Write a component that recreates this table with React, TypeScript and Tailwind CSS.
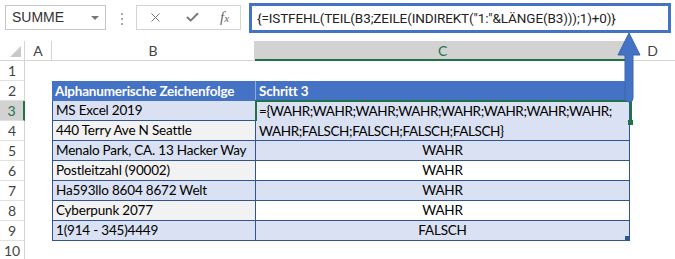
import { Check, X } from "lucide-react";

const uiFont = { fontFamily: '"Liberation Sans", Arial, sans-serif' };
const cellFont = { fontFamily: 'Lato, "Liberation Sans", sans-serif' };

const rows = [
  { n: 3, b: "MS Excel 2019", c: null },
  { n: 4, b: "440 Terry Ave N Seattle", c: null },
  { n: 5, b: "Menalo Park, CA. 13 Hacker Way", c: "WAHR" },
  { n: 6, b: "Postleitzahl (90002)", c: "WAHR" },
  { n: 7, b: "Ha593llo 8604 8672 Welt", c: "WAHR" },
  { n: 8, b: "Cyberpunk 2077", c: "WAHR" },
  { n: 9, b: "1(914 - 345)4449", c: "FALSCH" },
];

function RowHead({ n, active }: { n: number; active?: boolean }) {
  return (
    <div
      className={`flex items-center justify-center border-b border-[#e1e1e1] text-[14px] ${
        active
          ? "border-r-2 border-r-[#217346] bg-[#d2d2d2] text-[#217346]"
          : "border-r border-r-[#d4d4d4] text-[#444]"
      }`}
    >
      {n}
    </div>
  );
}

export default function App() {
  return (
    <div className="relative h-[259px] w-[675px] overflow-hidden bg-white text-black" style={uiFont}>
      {/* formula bar */}
      <div className="flex h-[41px] items-start">
        <div className="ml-[5px] mt-[5px] flex h-[25px] w-[101px] items-center justify-between border border-[#c6c6c6] pl-[6px] pr-[6px] text-[14px] text-[#333]">
          <span>SUMME</span>
          <span className="h-0 w-0 border-x-[4px] border-t-[4px] border-x-transparent border-t-[#777]" />
        </div>
        <div className="ml-[15px] mt-[13px] flex flex-col gap-[3px]">
          <span className="h-[2px] w-[2px] bg-[#aaa]" />
          <span className="h-[2px] w-[2px] bg-[#aaa]" />
          <span className="h-[2px] w-[2px] bg-[#aaa]" />
        </div>
        <div className="ml-[13px] mt-[5px] flex h-[25px] w-[105px] items-center border border-[#d4d4d4] text-[#777]">
          <X className="ml-[11px] h-[15px] w-[15px]" strokeWidth={1.6} />
          <Check className="ml-[22px] h-[15px] w-[15px]" strokeWidth={3} />
          <span
            className="ml-[20px] text-[15px] italic leading-none text-[#666]"
            style={{ fontFamily: '"Liberation Serif", serif' }}
          >
            f<span className="text-[11px]">x</span>
          </span>
        </div>
        <div
          className="ml-[8px] mt-[3px] flex h-[30px] w-[422px] items-center whitespace-nowrap border-[3px] border-[#4472c4] pl-[5px] text-[13.5px] tracking-[-0.12px] text-[#222]"
          style={{ fontFamily: 'Roboto, "Liberation Sans", sans-serif' }}
        >
          {'{=ISTFEHL(TEIL(B3;ZEILE(INDIREKT("1:"&LÄNGE(B3)));1)+0)}'}
        </div>
      </div>

      {/* sheet */}
      <div
        className="grid grid-cols-[25px_27px_203px_375px_1fr] grid-rows-[20px_repeat(10,20px)] whitespace-nowrap tracking-[-0.2px]"
        style={cellFont}
      >
        {/* column headers */}
        <div className="relative border-b border-r border-[#d4d4d4]">
          <svg className="absolute bottom-[3px] right-[3px]" width="11" height="11" viewBox="0 0 11 11">
            <polygon points="11,0 11,11 0,11" fill="#c8c8c8" />
          </svg>
        </div>
        <div className="flex items-center justify-center border-b border-r border-[#d4d4d4] text-[14px] text-[#444]">A</div>
        <div className="flex items-center justify-center border-b border-r border-[#d4d4d4] text-[14px] text-[#444]">B</div>
        <div className="flex items-center justify-center border-b-2 border-b-[#217346] bg-[#d2d2d2] text-[14px] text-[#217346]">C</div>
        <div className="flex items-center justify-center border-b border-[#d4d4d4] text-[14px] text-[#444]">D</div>

        {/* row 1 */}
        <RowHead n={1} />
        <div />
        <div />
        <div />
        <div />

        {/* row 2 header */}
        <RowHead n={2} />
        <div />
        <div className="flex items-center overflow-hidden bg-[#4472c4] pl-[3px] text-[13.5px] font-bold text-white">Alphanumerische Zeichenfolge</div>
        <div className="flex items-center border-l border-[#8eaadb] bg-[#4472c4] pl-[3px] text-[13.5px] font-bold text-white">Schritt 3</div>
        <div />

        {rows.map((r, i) => (
          <div key={r.n} className="contents">
            <RowHead n={r.n} active={r.n === 3} />
            <div />
            <div
              className={`flex items-center overflow-hidden border-b border-l border-[#2f5597] pl-[3px] text-[13.5px] ${
                i % 2 === 0 ? "bg-[#d9e1f2]" : "bg-[#f2f2f2]"
              }`}
            >
              {r.b}
            </div>
            {r.n === 3 && (
              <div className="relative row-span-2 border-x border-b border-[#2f5597] bg-[#d9e1f2] pl-[3px] text-[13.5px] leading-[20px] tracking-[-0.4px]">
                <div>={"{"}WAHR;WAHR;WAHR;WAHR;WAHR;WAHR;WAHR;WAHR;</div>
                <div>WAHR;FALSCH;FALSCH;FALSCH;FALSCH{"}"}</div>
                <div className="absolute left-[-1px] right-[-3px] top-[-1px] h-[21px] border-x-2 border-t-2 border-[#217346]" />
                <div className="absolute right-[-4px] top-[19px] h-[5px] w-[5px] bg-[#217346]" />
              </div>
            )}
            {r.c !== null && (
              <div
                className={`relative flex items-center justify-center border-x border-b border-[#2f5597] text-[13.5px] ${
                  i % 2 === 0 ? "bg-[#d9e1f2]" : "bg-white"
                }`}
              >
                {r.c}
                {r.n === 9 && <div className="absolute bottom-0 right-0 h-[4px] w-[4px] bg-[#2f5597]" />}
              </div>
            )}
            <div />
          </div>
        ))}

        <RowHead n={10} />
        <div />
        <div />
        <div />
        <div />
      </div>

      {/* callout arrow */}
      <svg className="absolute left-[616px] top-[32px]" width="26" height="72" viewBox="0 0 26 72">
        <path
          d="M13 1 L24 23 L17 23 L17 66 Q17 70 13 70 Q9 70 9 66 L9 23 L2 23 Z"
          fill="#4472c4"
          stroke="#3b64ad"
          strokeWidth="1"
        />
      </svg>
    </div>
  );
}
